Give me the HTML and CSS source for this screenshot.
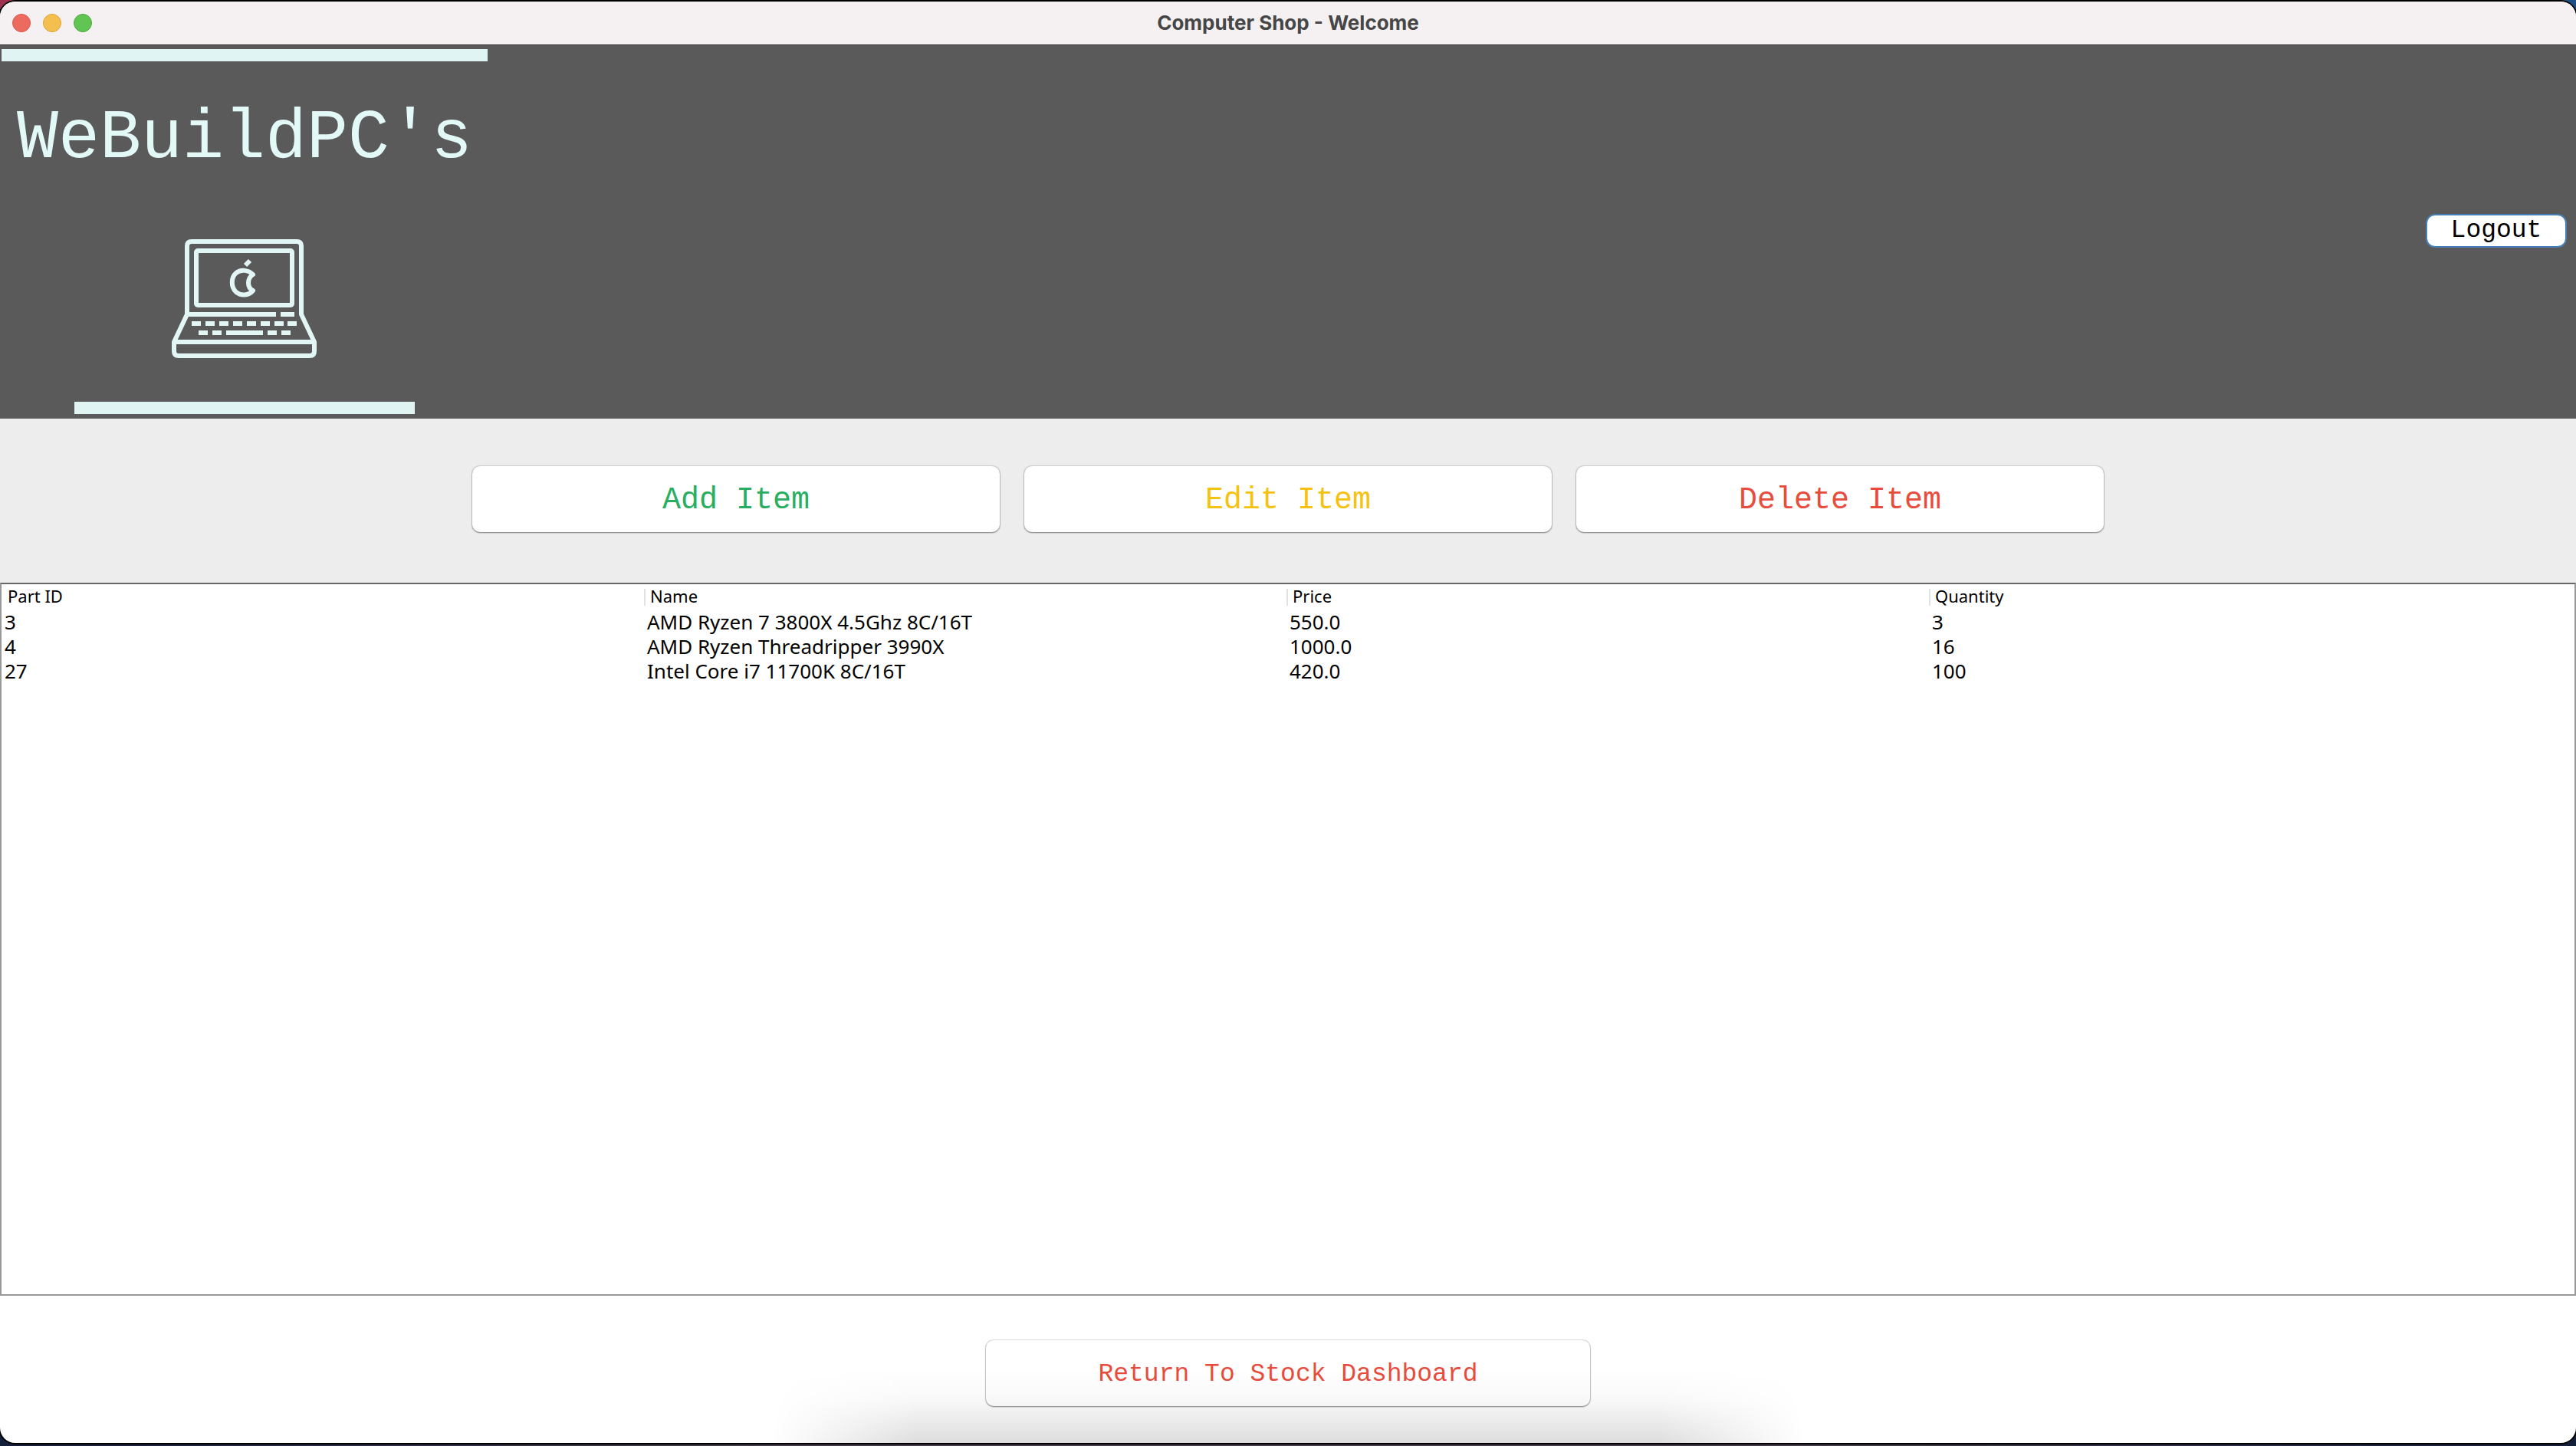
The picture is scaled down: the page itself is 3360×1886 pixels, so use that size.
FILE: index.html
```html
<!DOCTYPE html>
<html lang="en">
<head>
<meta charset="utf-8">
<title>Computer Shop - Welcome</title>
<link rel="stylesheet" href="styles.css">
</head>
<body>
<div class="window">
  <header class="titlebar">
    <div class="lights">
      <button class="light close" aria-label="Close"></button>
      <button class="light minimise" aria-label="Minimise"></button>
      <button class="light zoom" aria-label="Zoom"></button>
    </div>
    <h1 class="title">Computer Shop - Welcome</h1>
  </header>

  <section class="banner">
    <div class="brand">
      <div class="rule rule-top"></div>
      <p class="brand-name">WeBuildPC's</p>
      <svg class="laptop" viewBox="0 0 192 156" fill="none" stroke="#e2f6f5" stroke-width="6" stroke-linejoin="round" aria-hidden="true">
        <path d="M21 98V9q0-6 6-6H164q6 0 6 6V98L187 134V146q0 6-6 6H10q-6 0-6-6V134Z"/>
        <rect x="33" y="15" width="125" height="71" rx="2"/>
        <path d="M21 98H137M143 98H161M5 134H187"/>
        <path d="M27 110H39M45 110H57M63 110H75M81 110H93M99 110H111M117 110H129M135 110H147M152 110H164M36 122H48M54 122H66M72 122H120M126 122H138M144 122H156"/>
        <path d="M107 46C101 40 91 39 85 44C78 50 78 62 85 69C91 74 101 74 107 67C99 63 99 51 107 46Z"/>
        <path d="M97 34L103 28"/>
      </svg>
      <div class="rule rule-bottom"></div>
    </div>
    <button class="logout">Logout</button>
  </section>

  <nav class="actions">
    <button class="btn add">Add Item</button>
    <button class="btn edit">Edit Item</button>
    <button class="btn delete">Delete Item</button>
  </nav>

  <main class="stock">
    <table>
      <thead>
        <tr><th>Part ID</th><th>Name</th><th>Price</th><th>Quantity</th></tr>
      </thead>
      <tbody>
        <tr><td>3</td><td>AMD Ryzen 7 3800X 4.5Ghz 8C/16T</td><td>550.0</td><td>3</td></tr>
        <tr><td>4</td><td>AMD Ryzen Threadripper 3990X</td><td>1000.0</td><td>16</td></tr>
        <tr><td>27</td><td>Intel Core i7 11700K 8C/16T</td><td>420.0</td><td>100</td></tr>
      </tbody>
    </table>
  </main>

  <footer class="footer">
    <button class="btn return">Return To Stock Dashboard</button>
  </footer>
</div>
</body>
</html>
```
FILE: styles.css
```css
* { box-sizing: border-box; }

body {
  margin: 0;
  height: 100vh;
  padding: 2px 0 4px;
  display: flex;
  background:
    linear-gradient(90deg, #a03050 0 19%, #2f6188 20%, #1d4f85) top / 100% 50% no-repeat,
    linear-gradient(90deg, #14203a, #453c49 30% 70%, #14203a);
}

button {
  margin: 0;
  padding: 0;
  border: 0;
  font-family: "Courier New", "Liberation Mono", monospace;
}

.window {
  flex: 1;
  display: flex;
  flex-direction: column;
  overflow: hidden;
  border-radius: 20px;
  background: #fff;
  box-shadow: 0 0 0 2px #000;
}

.titlebar {
  display: grid;
  grid-template-columns: 1fr auto 1fr;
  align-items: center;
  height: 57px;
  padding: 0 16px;
  border-bottom: 1px solid #2f2d2e;
  background: #f5f1f2;
}

.lights { display: flex; gap: 16px; }

.light {
  width: 24px;
  height: 24px;
  border: 1px solid;
  border-radius: 50%;
}
.close { background: #ed6a5e; border-color: #d95549; }
.minimise { background: #f5bf4f; border-color: #d9a23c; }
.zoom { background: #61c554; border-color: #4ea73d; }

.title {
  margin: 0;
  font: 700 26px/32px Inter, "Liberation Sans", sans-serif;
  color: #464646;
}

.banner {
  display: flex;
  align-items: center;
  justify-content: space-between;
  height: 487px;
  padding: 0 12px 4px 0;
  background: #5a5a5a;
}

.brand {
  display: flex;
  flex-direction: column;
  align-items: center;
  width: 638px;
  height: 100%;
  padding: 5px 0 2px;
}

.rule { height: 16px; background: #e0f4f3; }
.rule-top { width: 634px; }
.rule-bottom { width: 444px; margin-top: auto; }

.brand-name {
  margin: 45px 0 0;
  font: 90px/112px "Courier New", "Liberation Mono", monospace;
  color: #e2f9f7;
}

.laptop { width: 192px; height: 156px; margin-top: 75px; }

.logout {
  width: 184px;
  height: 44px;
  border: 2px solid #477fb8;
  border-radius: 12px;
  background: #fff;
  font-size: 33px;
  line-height: 36px;
  color: #000;
}

.actions {
  display: flex;
  justify-content: center;
  gap: 32px;
  padding: 62px 0 66px;
  background: #ededed;
}

.btn {
  height: 86px;
  padding-top: 2px;
  border-radius: 10px;
  background: #fff;
  box-shadow: 0 0 1px 1px #0002, 0 1px 2px #0006;
  font-size: 40px;
}
.actions .btn { width: 688px; }
.add { color: #27ae60; }
.edit { color: #f5c211; }
.delete, .return { color: #e74c3c; }

.stock {
  flex: 1;
  border: 2px solid #999;
  border-top-color: #686868;
}

table {
  width: calc(100% - 4px);
  table-layout: fixed;
  border-collapse: collapse;
  font: 26px/32px "Noto Sans", "DejaVu Sans", sans-serif;
  color: #000;
}
th {
  height: 33px;
  padding: 0 8px 3px;
  font-size: 22px;
  line-height: 30px;
  font-weight: 400;
  text-align: left;
}
th + th { background: linear-gradient(#e2e2e2, #e2e2e2) left center / 2px 22px no-repeat; }
td { height: 32px; padding: 0 4px; }

.footer {
  position: relative;
  display: flex;
  justify-content: center;
  padding: 58px 0 48px;
}
/* soft shadow rising from the dock below the window */
.footer::after {
  content: "";
  position: absolute;
  inset: auto 30% 0;
  height: 96px;
  background: linear-gradient(#0000, #00000006 40%, #00000022);
  mask-image: linear-gradient(90deg, #0000, #000 14% 86%, #0000);
  pointer-events: none;
}
.return {
  width: 788px;
  font-size: 33px;
}
```
